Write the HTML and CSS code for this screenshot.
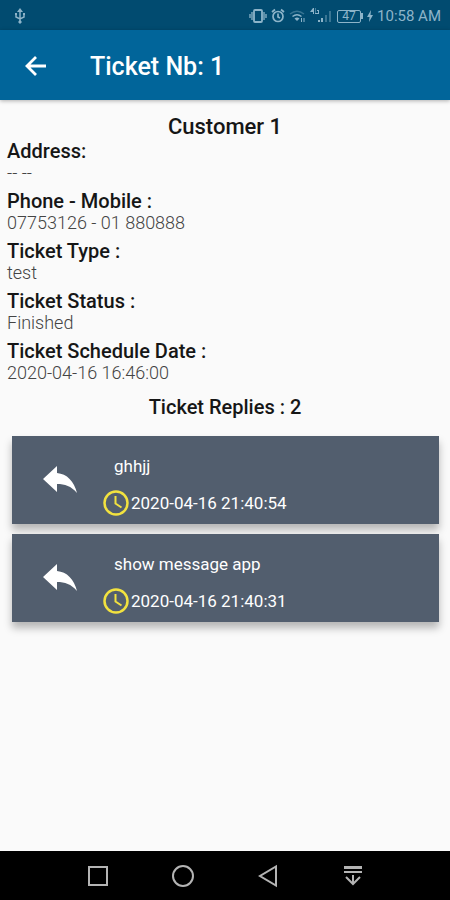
FILE: index.html
```html
<!DOCTYPE html>
<html lang="en">
<head>
<meta charset="utf-8">
<meta name="viewport" content="width=device-width, initial-scale=1">
<title>Ticket Nb: 1</title>
<link rel="stylesheet" href="styles.css">
</head>
<body>
<div class="status">
  <svg class="usb" width="12" height="16" viewBox="0 0 12 16" fill="none" stroke="currentColor" stroke-width="1.5"><path d="M6 3v11M2 6v3l4 2 4-2V6"/><path d="M6 0l3 4H3zM6 12l2 2-2 2-2-2z" fill="currentColor" stroke="none"/><path d="M1 6h2M9 6h2" stroke-width="2"/></svg>
  <div class="indicators">
    <svg width="18" height="16" viewBox="0 0 18 16" fill="none" stroke="currentColor" stroke-width="1.8"><rect x="5" y="2" width="8" height="12" rx="1"/><path d="M3 4v8M15 4v8M1 6v4M17 6v4" stroke-width="1.3"/></svg>
    <svg width="14" height="16" viewBox="0 0 14 16" fill="none" stroke="currentColor" stroke-width="1.7"><circle cx="7" cy="8.500" r="5"/><path d="M1 4l3-2.500M13 4l-3-2.500M7 5.500V9l2 1"/></svg>
    <svg class="wifi" width="17" height="16" viewBox="0 0 17 16" fill="none" stroke="currentColor" stroke-width="1.500"><path d="M1 6q7-5.500 14 0" opacity=".4"/><path d="M3.500 8.500q4.500-3.500 9 0"/><path d="M5.500 10.500Q8 8.500 10.500 10.500L8 13z" fill="currentColor" stroke="none"/><path d="M12.500 10v4M15 10v4" stroke-width="1"/></svg>
    <svg class="signal" width="23" height="18" viewBox="0 0 23 18" fill="currentColor"><path d="M3 1L0 5h3v2h1V1zM8 1H5.500v5H8V4H7V3h2v4H5V1z"/><rect x="8" y="13" width="2" height="2"/><rect x="11" y="11" width="2" height="4"/><g opacity=".4"><rect x="15" y="8" width="2" height="7"/><rect x="19" y="4" width="2" height="11"/></g></svg>
    <span class="battery"><span class="level">47</span></span>
    <svg width="6" height="12" viewBox="0 0 6 12" fill="currentColor"><path d="M4 0L0 7h2.500L2 12l4-7H3.500z"/></svg>
    <time class="clock">10:58 AM</time>
  </div>
</div>
<header class="appbar">
  <button class="back" aria-label="Back"><svg width="22" height="20" viewBox="0 0 22 20" fill="none" stroke="currentColor" stroke-width="2.800"><path d="M21 10H3M11 1l-9 9 9 9"/></svg></button>
  <h1>Ticket Nb: 1</h1>
</header>
<main>
  <h2 class="customer">Customer 1</h2>
  <dl class="details">
    <div><dt>Address:</dt><dd>-- --</dd></div>
    <div><dt>Phone - Mobile :</dt><dd>07753126 - 01 880888</dd></div>
    <div><dt>Ticket Type :</dt><dd>test</dd></div>
    <div><dt>Ticket Status :</dt><dd>Finished</dd></div>
    <div><dt>Ticket Schedule Date :</dt><dd>2020-04-16 16:46:00</dd></div>
  </dl>
  <h2 class="replies-title">Ticket Replies : 2</h2>
  <ul class="replies">
    <li class="reply">
      <svg class="arrow" width="34" height="28" viewBox="0 0 34 28" fill="currentColor"><path d="M0 13L14 0v7C24 8 31 15 34 27 28 20 22 18 14 18v8z"/></svg>
      <div class="body">
        <p class="message">ghhjj</p>
        <p class="date"><svg width="26" height="26" viewBox="0 0 26 26" fill="none" stroke="currentColor" stroke-width="2.500"><circle cx="13" cy="13" r="11.500"/><path d="M12.500 6v7.500l6 4" stroke-width="2"/></svg><time>2020-04-16 21:40:54</time></p>
      </div>
    </li>
    <li class="reply">
      <svg class="arrow" width="34" height="28" viewBox="0 0 34 28" fill="currentColor"><path d="M0 13L14 0v7C24 8 31 15 34 27 28 20 22 18 14 18v8z"/></svg>
      <div class="body">
        <p class="message">show message app</p>
        <p class="date"><svg width="26" height="26" viewBox="0 0 26 26" fill="none" stroke="currentColor" stroke-width="2.500"><circle cx="13" cy="13" r="11.500"/><path d="M12.500 6v7.500l6 4" stroke-width="2"/></svg><time>2020-04-16 21:40:31</time></p>
      </div>
    </li>
  </ul>
</main>
<nav class="navbar" aria-label="System">
  <button aria-label="Recent apps"><svg width="24" height="24" viewBox="0 0 24 24"><rect x="3" y="3" width="18" height="18"/></svg></button>
  <button aria-label="Home"><svg width="24" height="24" viewBox="0 0 24 24"><circle cx="12" cy="12" r="10"/></svg></button>
  <button aria-label="Back"><svg width="24" height="24" viewBox="0 0 24 24"><path d="M20 2.500v19L4 12z"/></svg></button>
  <button aria-label="Hide navigation"><svg width="24" height="24" viewBox="0 0 24 24"><path d="M3 3.500h18" stroke-width="3"/><path d="M3 8h18M12 11v9M5 13l7 7 7-7"/></svg></button>
</nav>
</body>
</html>
```
FILE: styles.css
```css
* {
  box-sizing: border-box;
}

body {
  display: flex;
  flex-direction: column;
  min-height: 100vh;
  margin: 0;
  background: #fafafa;
  color: #161616;
  font-family: Roboto, "Liberation Sans", sans-serif;
}

h1, h2, p, dl, dd, ul {
  margin: 0;
  padding: 0;
}

button {
  display: grid;
  place-items: center;
  padding: 0;
  border: 0;
  background: none;
  color: inherit;
}

svg {
  display: block;
  flex: none;
}

.status {
  display: flex;
  align-items: center;
  justify-content: space-between;
  height: 30px;
  padding: 2px 9px 0 14px;
  background: #014b70;
  color: #8db4c9;
}

.indicators {
  display: flex;
  align-items: center;
  gap: 4px;
}

.battery {
  display: flex;
  align-items: center;
}

.battery::after {
  content: "";
  width: 2px;
  height: 6px;
  background: currentColor;
}

.level {
  width: 24px;
  border: 1px solid currentColor;
  border-radius: 2px;
  font-size: 12px;
  line-height: 11px;
  text-align: center;
}

.clock {
  font-size: 15px;
}

.appbar {
  display: flex;
  align-items: center;
  gap: 43px;
  height: 70px;
  padding: 2px 25px 0;
  background: #01659a;
  box-shadow: 0 1px 4px rgba(0, 0, 0, .3);
  color: #fff;
}

.appbar h1 {
  font-size: 25px;
  font-weight: 500;
}

main {
  flex: 1;
  padding-top: 14px;
}

h2 {
  font-weight: 500;
  text-align: center;
}

.customer {
  font-size: 22px;
  line-height: 26px;
}

.details {
  display: grid;
  gap: 6px;
  padding: 0 7px;
}

dt {
  font-size: 20px;
  font-weight: 500;
  line-height: 22px;
}

dd {
  color: #444;
  font-size: 18px;
  font-weight: 300;
  line-height: 22px;
}

.replies-title {
  margin-top: 12px;
  font-size: 20px;
  line-height: 22px;
}

.replies {
  display: grid;
  gap: 10px;
  padding: 18px 11px 0 12px;
  list-style: none;
}

.reply {
  display: flex;
  align-items: center;
  gap: 26px;
  height: 88px;
  padding-left: 31px;
  background: #525e6e;
  box-shadow: 0 6px 8px rgba(0, 0, 0, .28);
  color: #fff;
}

.body {
  display: grid;
  gap: 12px;
  padding-top: 10px;
  font-size: 17px;
  line-height: 24px;
}

.message {
  padding-left: 11px;
}

.date {
  display: flex;
  align-items: center;
  gap: 2px;
}

.date svg {
  color: #f2e23f;
}

.navbar {
  display: grid;
  grid-template-columns: repeat(4, 1fr);
  height: 49px;
  padding: 0 55px;
  background: #000;
}

.navbar svg {
  fill: none;
  stroke: #b4b4b4;
  stroke-width: 2;
}
```
